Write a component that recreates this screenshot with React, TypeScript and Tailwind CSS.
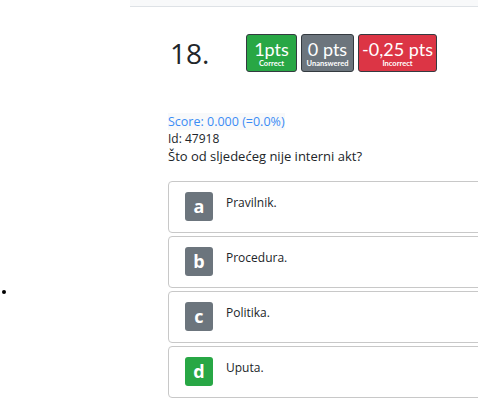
const answers = [
  { letter: "a", text: "Pravilnik.", correct: false },
  { letter: "b", text: "Procedura.", correct: false },
  { letter: "c", text: "Politika.", correct: false },
  { letter: "d", text: "Uputa.", correct: true },
];

function PtsBadge({
  value,
  label,
  className,
}: {
  value: string;
  label: string;
  className: string;
}) {
  return (
    <div
      className={`flex h-[38px] flex-col items-center justify-center whitespace-nowrap rounded-[3px] border border-[#343a40] text-white ${className}`}
      style={{ fontFamily: "Lato, sans-serif" }}
    >
      <span className="text-[18px] leading-[20px]">{value}</span>
      <span className="text-[7.5px] font-bold leading-[9px]">{label}</span>
    </div>
  );
}

export default function App() {
  return (
    <div
      className="relative h-[408px] w-[478px] overflow-hidden bg-white text-[#212529]"
      style={{ fontFamily: '"Open Sans", "Noto Sans", sans-serif' }}
    >
      <div className="ml-[130px] h-[7px] border-b border-[#dee2e6] bg-[#f8f9fa]" />

      <span className="absolute left-[2px] top-[290px] h-[4px] w-[4px] rounded-full bg-black" />

      <div className="ml-[168px] w-[340px] pt-[27px]">
        <div className="flex items-center">
          <div className="w-[78px] pl-[2px] text-[28px] leading-[38px]">18.</div>
          <div className="flex gap-[4px]">
            <PtsBadge value="1pts" label="Correct" className="w-[51px] bg-[#28a745]" />
            <PtsBadge value="0 pts" label="Unanswered" className="w-[53px] bg-[#6c757d]" />
            <PtsBadge value="-0,25 pts" label="Incorrect" className="w-[79px] bg-[#dc3545]" />
          </div>
        </div>

        <div className="mt-[41px] text-[12px] leading-[17px]">
          <div className="inline-block bg-[#f8f9fa] text-[12.5px] text-[#3b8cf5]">Score: 0.000 (=0.0%)</div>
          <div>Id: 47918</div>
          <div className="text-[13px] leading-[18px]">Što od sljedećeg nije interni akt?</div>
        </div>

        <div className="mt-[16px] flex flex-col gap-[3px]">
          {answers.map((a) => (
            <div
              key={a.letter}
              className="flex h-[52px] items-start rounded-[4px] border border-[#c8c8c8] pl-[16px] pt-[10px]"
            >
              <div
                className={`flex h-[29px] w-[28px] items-center justify-center rounded-[3px] text-[18px] font-bold text-white ${
                  a.correct ? "bg-[#28a745]" : "bg-[#6c757d]"
                }`}
              >
                {a.letter}
              </div>
              <div className="ml-[13px] pt-[3px] text-[12px] leading-[16px]">{a.text}</div>
            </div>
          ))}
        </div>
      </div>
    </div>
  );
}
